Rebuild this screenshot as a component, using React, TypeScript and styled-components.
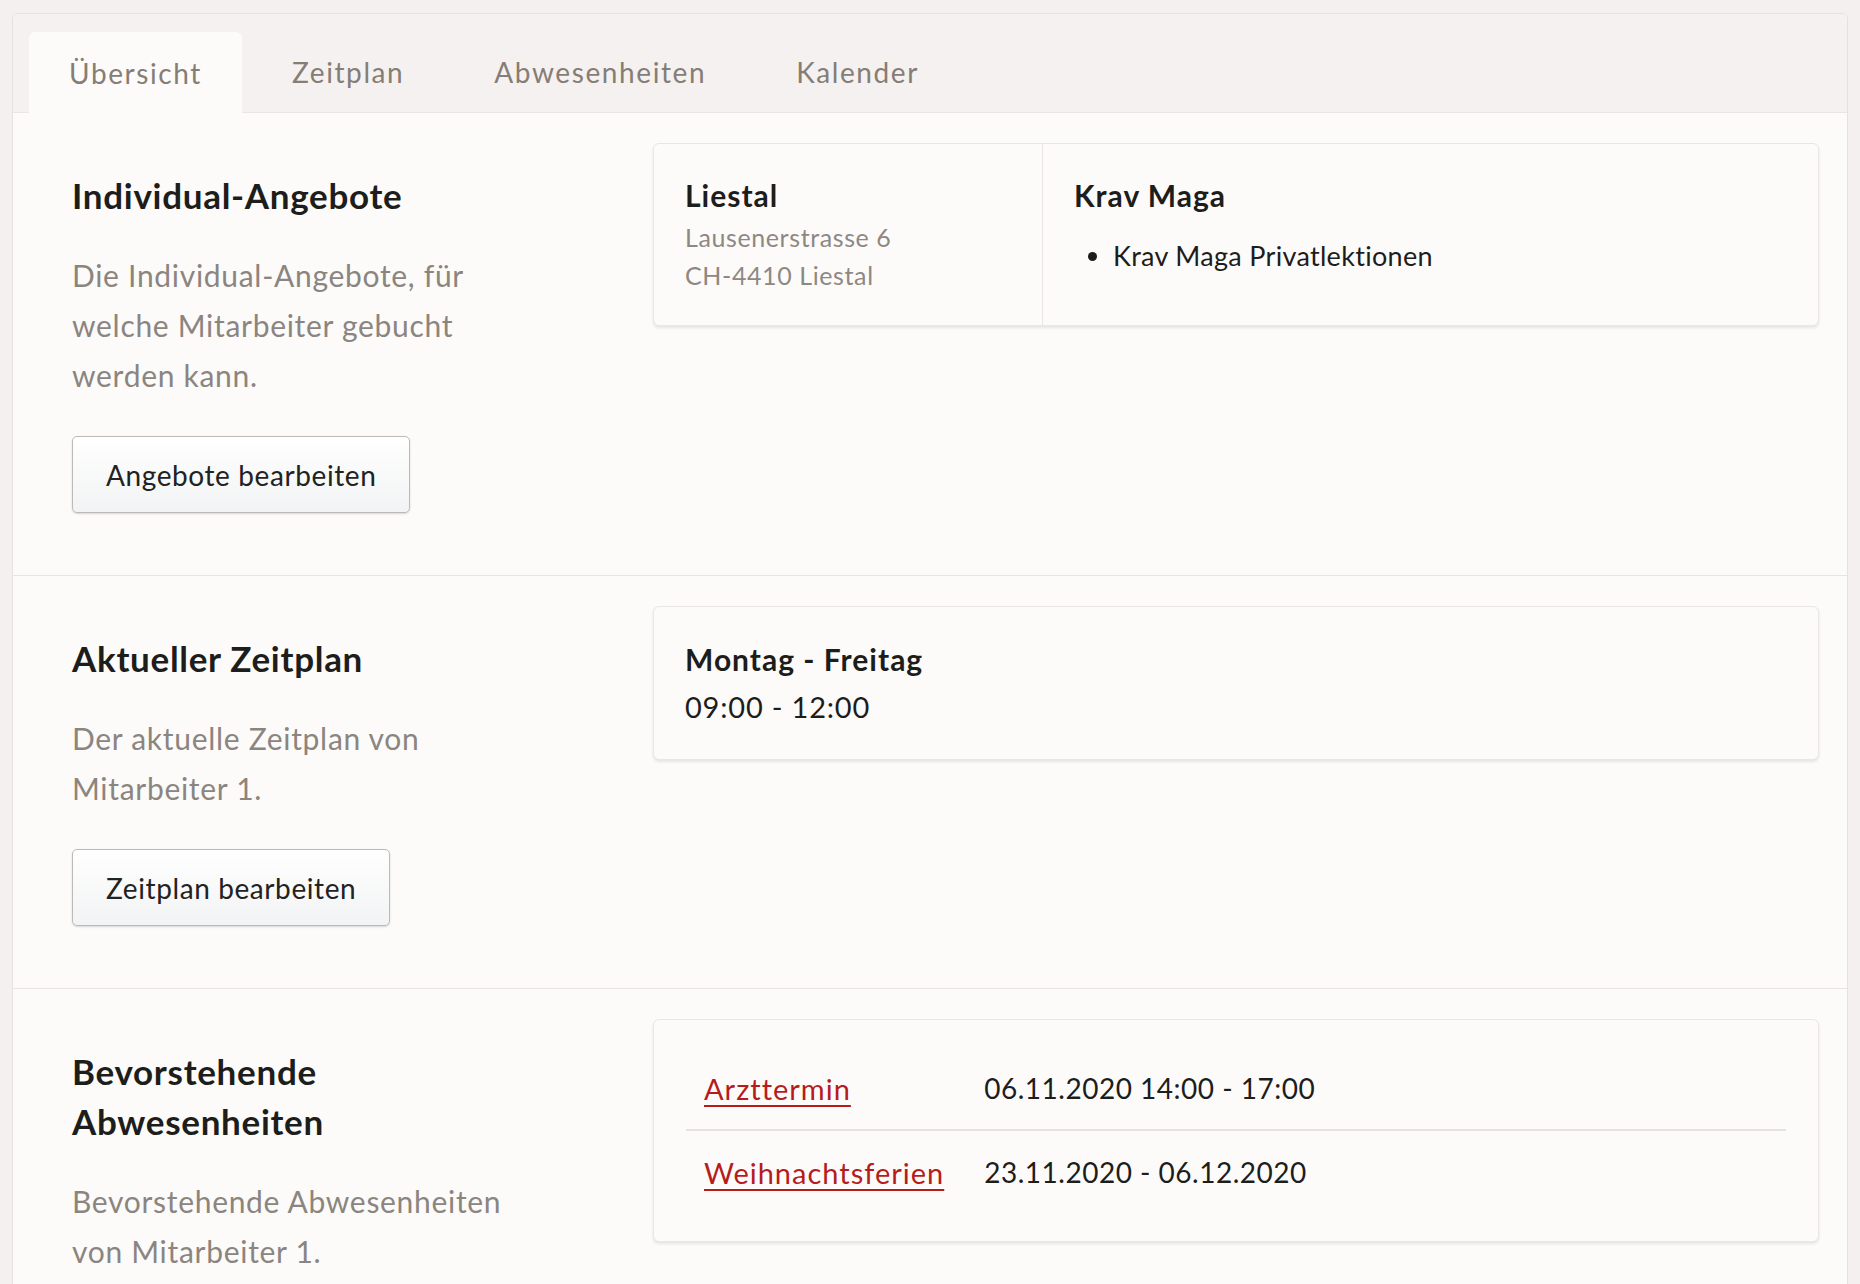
import styled, { createGlobalStyle } from "styled-components";

const GlobalStyle = createGlobalStyle`
  body {
    margin: 0;
    background: #f4f0ef;
    font-family: Lato, "Open Sans", "Liberation Sans", sans-serif;
    color: #1d1d1b;
  }
`;

const Frame = styled.div`
  margin: 13px 12px 0 12px;
  border: 1px solid #e6e1de;
  border-radius: 6px 6px 0 0;
  background: #fcfbfa;
  overflow: hidden;
`;

const TabBar = styled.div`
  display: flex;
  align-items: flex-end;
  height: 98px;
  padding-left: 16px;
  background: #f5f1f0;
  border-bottom: 1px solid #ebe6e3;
`;

const Tab = styled.div<{ $active?: boolean }>`
  display: flex;
  align-items: center;
  padding: 0 40px;
  margin-right: 10px;
  font-size: 28px;
  letter-spacing: 1.6px;
  color: #857d76;
  border-radius: 6px 6px 0 0;
  background: ${(p) => (p.$active ? "#fcfbfa" : "transparent")};
  margin-bottom: ${(p) => (p.$active ? "-1px" : "0")};
  height: ${(p) => (p.$active ? "81px" : "80px")};
`;

const Section = styled.section`
  display: grid;
  grid-template-columns: 581px 1fr;
  padding: 30px 28px 62px 59px;
  border-bottom: 1px solid #e8e4e1;
`;

const Intro = styled.div`
  padding-top: 27px;
`;

const Heading = styled.h2`
  margin: 0;
  font-size: 35px;
  font-weight: 700;
  letter-spacing: 0.7px;
  line-height: 50px;
  color: #1d1d1b;
  max-width: 440px;
`;

const Description = styled.p`
  margin: 30px 0 36px;
  font-size: 30px;
  letter-spacing: 0.7px;
  line-height: 50px;
  color: #8b8580;
  max-width: 460px;
`;

const Button = styled.button`
  height: 77px;
  padding: 0 33px;
  font-family: inherit;
  font-size: 28px;
  letter-spacing: 0.6px;
  color: #222;
  background: linear-gradient(#ffffff, #f2f3f4);
  border: 1px solid #bdb9b6;
  border-radius: 5px;
  box-shadow: 0 1px 2px rgba(0, 0, 0, 0.15);
  cursor: pointer;
`;

const Card = styled.div`
  align-self: start;
  background: #fcfbfa;
  border: 1px solid #e9e6e3;
  border-radius: 6px;
  box-shadow: 0 2px 3px rgba(0, 0, 0, 0.09);
`;

const SplitCard = styled(Card)`
  display: grid;
  grid-template-columns: 389px 1fr;
`;

const Cell = styled.div<{ $divider?: boolean }>`
  padding: 31px 31px 31px;
  border-right: ${(p) => (p.$divider ? "1px solid #e9e6e3" : "none")};
`;

const CardTitle = styled.div`
  font-size: 30px;
  font-weight: 700;
  letter-spacing: 1px;
  line-height: 40px;
  color: #1d1d1b;
`;

const Address = styled.div`
  margin-top: 3px;
  font-size: 25px;
  letter-spacing: 0.6px;
  line-height: 38px;
  color: #8e8882;
`;

const OfferList = styled.ul`
  margin: 21px 0 0;
  padding-left: 39px;
  font-size: 27px;
  letter-spacing: 0.3px;
  line-height: 40px;
  color: #1d1d1b;
`;

const ScheduleCard = styled(Card)`
  padding: 32px 31px 32px;
`;

const TimeRange = styled.div`
  margin-top: 8px;
  font-size: 29px;
  letter-spacing: 0.8px;
  line-height: 40px;
  color: #1d1d1b;
`;

const AbsenceCard = styled(Card)`
  padding: 27px 32px 28px;
`;

const AbsenceTable = styled.table`
  width: 100%;
  border-collapse: collapse;
  font-size: 28px;
  letter-spacing: 0.5px;

  tr + tr td {
    border-top: 2px solid #e6e2df;
  }
  td {
    height: 82px;
    padding: 0 18px;
    white-space: nowrap;
  }
  td:last-child {
    width: 100%;
    padding-left: 22px;
  }
`;

const AbsenceLink = styled.a`
  font-size: 29px;
  letter-spacing: 1px;
  color: #b71c1c;
  text-decoration: underline;
  text-decoration-thickness: 2px;
  text-underline-offset: 5px;
`;

const absences = [
  { name: "Arzttermin", when: "06.11.2020 14:00 - 17:00" },
  { name: "Weihnachtsferien", when: "23.11.2020 - 06.12.2020" },
];

const App = () => {
  return (
    <>
      <GlobalStyle />
      <Frame>
        <TabBar>
          <Tab $active>Übersicht</Tab>
          <Tab>Zeitplan</Tab>
          <Tab>Abwesenheiten</Tab>
          <Tab>Kalender</Tab>
        </TabBar>

        <Section>
          <Intro>
            <Heading>Individual-Angebote</Heading>
            <Description>
              Die Individual-Angebote, für welche Mitarbeiter gebucht werden
              kann.
            </Description>
            <Button>Angebote bearbeiten</Button>
          </Intro>
          <SplitCard>
            <Cell $divider>
              <CardTitle>Liestal</CardTitle>
              <Address>
                Lausenerstrasse 6
                <br />
                CH-4410 Liestal
              </Address>
            </Cell>
            <Cell>
              <CardTitle>Krav Maga</CardTitle>
              <OfferList>
                <li>Krav Maga Privatlektionen</li>
              </OfferList>
            </Cell>
          </SplitCard>
        </Section>

        <Section>
          <Intro>
            <Heading>Aktueller Zeitplan</Heading>
            <Description>Der aktuelle Zeitplan von Mitarbeiter 1.</Description>
            <Button>Zeitplan bearbeiten</Button>
          </Intro>
          <ScheduleCard>
            <CardTitle>Montag - Freitag</CardTitle>
            <TimeRange>09:00 - 12:00</TimeRange>
          </ScheduleCard>
        </Section>

        <Section>
          <Intro>
            <Heading>Bevorstehende Abwesenheiten</Heading>
            <Description>
              Bevorstehende Abwesenheiten von Mitarbeiter 1.
            </Description>
          </Intro>
          <AbsenceCard>
            <AbsenceTable>
              <tbody>
                {absences.map((a) => (
                  <tr key={a.name}>
                    <td>
                      <AbsenceLink href="#">{a.name}</AbsenceLink>
                    </td>
                    <td>{a.when}</td>
                  </tr>
                ))}
              </tbody>
            </AbsenceTable>
          </AbsenceCard>
        </Section>
      </Frame>
    </>
  );
};

export default App;
